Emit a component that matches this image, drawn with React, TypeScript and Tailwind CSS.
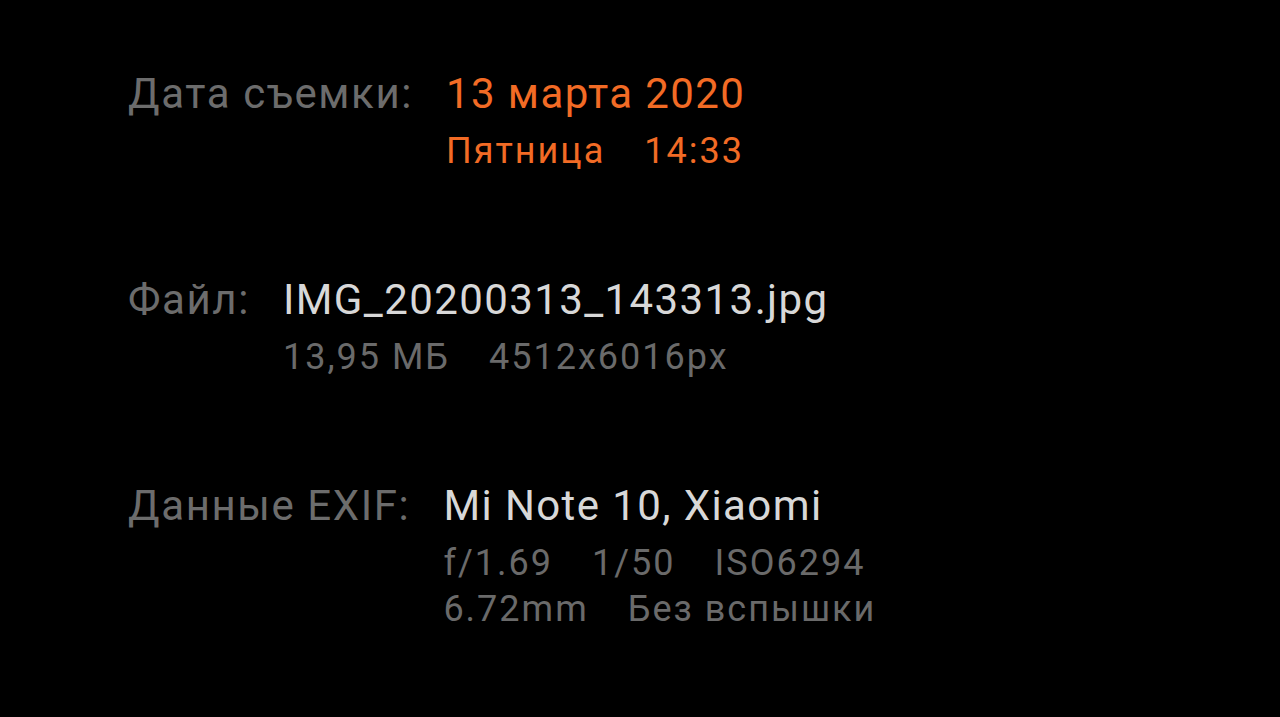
import React from 'react';

interface InfoRow {
  label: string;
  value: string;
  valueColor: string;
  details: string[][];
  detailColor: string;
}

const ROWS: InfoRow[] = [
  {
    label: 'Дата съемки:',
    value: '13 марта 2020',
    valueColor: 'text-[#f26b25]',
    details: [['Пятница', '14:33']],
    detailColor: 'text-[#f26b25]',
  },
  {
    label: 'Файл:',
    value: 'IMG_20200313_143313.jpg',
    valueColor: 'text-[#d8d8d8]',
    details: [['13,95 МБ', '4512x6016px']],
    detailColor: 'text-[#6a6a6a]',
  },
  {
    label: 'Данные EXIF:',
    value: 'Mi Note 10, Xiaomi',
    valueColor: 'text-[#d8d8d8]',
    details: [
      ['f/1.69', '1/50', 'ISO6294'],
      ['6.72mm', 'Без вспышки'],
    ],
    detailColor: 'text-[#6a6a6a]',
  },
];

const Row = ({ row }: { row: InfoRow }) => {
  return (
    <div className="flex gap-[33px]">
      <div className="text-[42px] leading-[48px] tracking-[1.6px] text-[#6c6c6c]">{row.label}</div>
      <div className="flex flex-col">
        <div className={`text-[42px] leading-[48px] tracking-[1.4px] ${row.valueColor}`}>{row.value}</div>
        <div className="mt-[10px] flex flex-col">
          {row.details.map((line, i) => (
            <div key={i} className={`flex gap-[39px] text-[36px] leading-[46px] tracking-[2px] ${row.detailColor}`}>
              {line.map((item) => (
                <span key={item}>{item}</span>
              ))}
            </div>
          ))}
        </div>
      </div>
    </div>
  );
};

const App = () => {
  return (
    <div
      className="w-[1280px] h-[717px] bg-black pl-[128px] pt-[70px] flex flex-col gap-[102px] overflow-hidden"
      style={{ fontFamily: 'Roboto, "Noto Sans", sans-serif' }}
    >
      {ROWS.map((row) => (
        <Row key={row.label} row={row} />
      ))}
    </div>
  );
};

export default App;
